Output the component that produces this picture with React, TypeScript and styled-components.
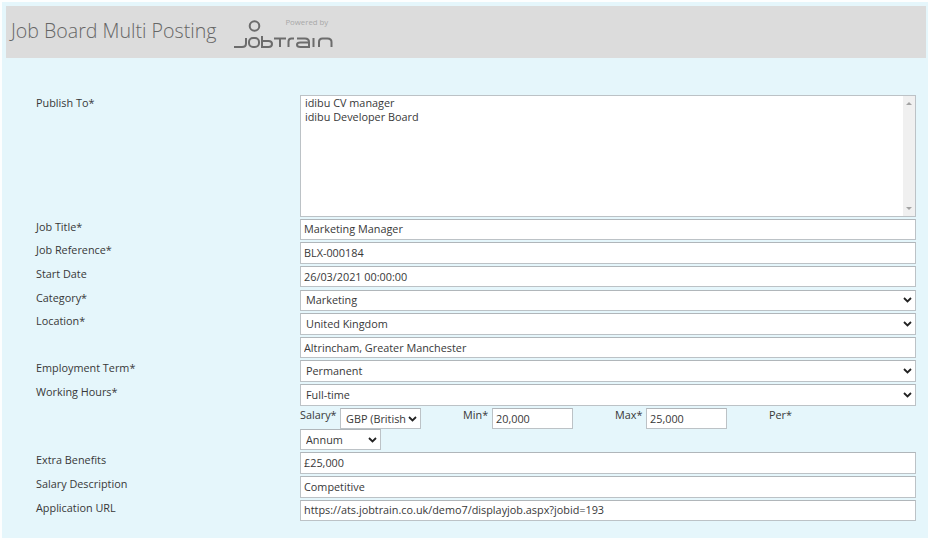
import { createGlobalStyle, styled } from "styled-components";

const GlobalStyle = createGlobalStyle`
  html, body {
    margin: 0;
    padding: 0;
    background: #fdfefe;
  }

  body {
    font-family: "Open Sans", "Liberation Sans", sans-serif;
    font-size: 10.85px;
    color: #383838;
  }
`;

const chevron = `url("data:image/svg+xml,%3Csvg xmlns='http://www.w3.org/2000/svg' width='9' height='6'%3E%3Cpath d='M1 1l3.5 3.5L8 1' fill='none' stroke='%23222' stroke-width='1.8'/%3E%3C/svg%3E")`;

function Logo() {
  return (
    <LogoSvg width="104" height="32" viewBox="0 0 104 32" fill="none" stroke="#6c6c6c" strokeWidth="2">
      <circle cx="22.500" cy="8" r="4.800" />
      <path d="M2 29h8c3 0 4-1.500 4-3.500V20" />
      <rect x="17" y="20" width="10" height="9" rx="4" />
      <path d="M30 18v11h6.500c2.500 0 3.500-1.200 3.500-3s-1-3-3.500-3H30" />
      <path d="M42 20.500h12M48 20.500V29" />
      <path d="M56.500 29v-5.500c0-2 1-3 3-3h2.500" />
      <path d="M65 20.500h8c3 0 4 1.500 4 3.500v5h-8.500c-2.500 0-3.500-.8-3.500-2.200s1-2.300 3.500-2.300H77" />
      <path d="M81.500 20v9" />
      <path d="M87 29v-5c0-2.500 1.500-3.500 3.500-3.500h5c2.500 0 4 1 4 3.500v5" />
    </LogoSvg>
  );
}

export default function App() {
  return (
    <>
      <GlobalStyle />
      <Panel>
        <Header>
          <Title>Job Board Multi Posting</Title>
          <Brand>
            <Logo />
            <Powered>Powered by</Powered>
          </Brand>
        </Header>
        <Form>
          <Label>Publish To*</Label>
          <ListBox>
            <ListItems>
              <div>idibu CV manager</div>
              <div>idibu Developer Board</div>
            </ListItems>
            <ScrollTrack>
              <Arrow />
              <Arrow $down />
            </ScrollTrack>
          </ListBox>

          <Label>Job Title*</Label>
          <TextField defaultValue="Marketing Manager" />

          <Label>Job Reference*</Label>
          <TextField defaultValue="BLX-000184" />

          <Label>Start Date</Label>
          <TextField defaultValue="26/03/2021 00:00:00" />

          <Label>Category*</Label>
          <SelectField defaultValue="Marketing">
            <option>Marketing</option>
          </SelectField>

          <Label>Location*</Label>
          <SelectField defaultValue="United Kingdom">
            <option>United Kingdom</option>
          </SelectField>

          <Label />
          <TextField defaultValue="Altrincham, Greater Manchester" />

          <Label>Employment Term*</Label>
          <SelectField defaultValue="Permanent">
            <option>Permanent</option>
          </SelectField>

          <Label>Working Hours*</Label>
          <SelectField defaultValue="Full-time">
            <option>Full-time</option>
          </SelectField>

          <Label />
          <SalaryBlock>
            <SalaryRow>
              <SalaryLabel $width={40}>Salary*</SalaryLabel>
              <SelectField $width={81} defaultValue="GBP (British">
                <option>GBP (British</option>
              </SelectField>
              <SalaryLabel $width={29} $offset={42}>Min*</SalaryLabel>
              <TextField $width={81} defaultValue="20,000" />
              <SalaryLabel $width={31} $offset={42}>Max*</SalaryLabel>
              <TextField $width={81} defaultValue="25,000" />
              <SalaryLabel $width={30} $offset={42}>Per*</SalaryLabel>
            </SalaryRow>
            <SelectField $width={81} defaultValue="Annum">
              <option>Annum</option>
            </SelectField>
          </SalaryBlock>

          <Label>Extra Benefits</Label>
          <TextField defaultValue="£25,000" />

          <Label>Salary Description</Label>
          <TextField defaultValue="Competitive" />

          <Label>Application URL</Label>
          <TextField defaultValue="https://ats.jobtrain.co.uk/demo7/displayjob.aspx?jobid=193" />
        </Form>
      </Panel>
    </>
  );
}

const Panel = styled.main`
  box-sizing: border-box;
  width: 926px;
  height: 536px;
  margin: 2px;
  padding: 4px 2px 0 4px;
  background: #e5f6fb;
`;

const Header = styled.header`
  height: 52px;
  width: 920px;
  display: flex;
  align-items: center;
  padding-left: 5px;
  box-sizing: border-box;
  background: #dcdcdc;
`;

const Title = styled.h1`
  margin: 0 0 3px;
  font-size: 19.600px;
  font-weight: 300;
  color: #666;
`;

const Brand = styled.div`
  position: relative;
  margin-left: 16px;
  width: 104px;
  height: 44px;
  display: flex;
  align-items: flex-end;
`;

const LogoSvg = styled.svg`
  display: block;
  margin-bottom: 4px;
`;

const Powered = styled.span`
  position: absolute;
  top: 7px;
  left: 53px;
  font-size: 7.800px;
  color: #a8a8a8;
  white-space: nowrap;
`;

const Form = styled.form`
  display: grid;
  grid-template-columns: 264px 616px;
  row-gap: 2.150px;
  margin-top: 37px;
  padding-left: 30px;
`;

const Label = styled.label`
  padding-top: 1px;
  line-height: 14px;
`;

const fieldBase = `
  box-sizing: border-box;
  height: 21.500px;
  margin: 0;
  background: #fff;
  border: 1px solid #bcc2c6;
  border-top-color: #b0b6ba;
  border-radius: 0;
  font-family: "Open Sans", "Liberation Sans", sans-serif;
  font-size: 10.850px;
  color: #383838;
  outline: none;
`;

const TextField = styled.input<{ $width?: number }>`
  ${fieldBase}
  width: ${(p) => (p.$width ? `${p.$width}px` : "100%")};
  padding: 0 3px 1px;
`;

const SelectField = styled.select<{ $width?: number }>`
  ${fieldBase}
  width: ${(p) => (p.$width ? `${p.$width}px` : "100%")};
  padding: 0 14px 1px 5px;
  appearance: none;
  background-image: ${chevron};
  background-repeat: no-repeat;
  background-position: right 3px center;
`;

const ListBox = styled.div`
  box-sizing: border-box;
  height: 121.500px;
  display: flex;
  background: #fff;
  border: 1px solid #bcc2c6;
`;

const ListItems = styled.div`
  flex: 1;
  padding: 0 4px;
  line-height: 14px;
`;

const ScrollTrack = styled.div`
  width: 12px;
  display: flex;
  flex-direction: column;
  justify-content: space-between;
  align-items: center;
  padding: 6px 0;
  background: #f0f0f0;
`;

const Arrow = styled.span<{ $down?: boolean }>`
  width: 0;
  height: 0;
  border-left: 3px solid transparent;
  border-right: 3px solid transparent;
  ${(p) => (p.$down ? "border-top: 3px solid #a3a3a3;" : "border-bottom: 3px solid #a3a3a3;")}
`;

const SalaryBlock = styled.div`
  display: flex;
  flex-direction: column;
`;

const SalaryRow = styled.div`
  display: flex;
  align-items: flex-start;
  height: 21px;
`;

const SalaryLabel = styled.span<{ $width: number; $offset?: number }>`
  flex: none;
  width: ${(p) => p.$width}px;
  margin-left: ${(p) => p.$offset ?? 0}px;
  line-height: 14px;
`;
